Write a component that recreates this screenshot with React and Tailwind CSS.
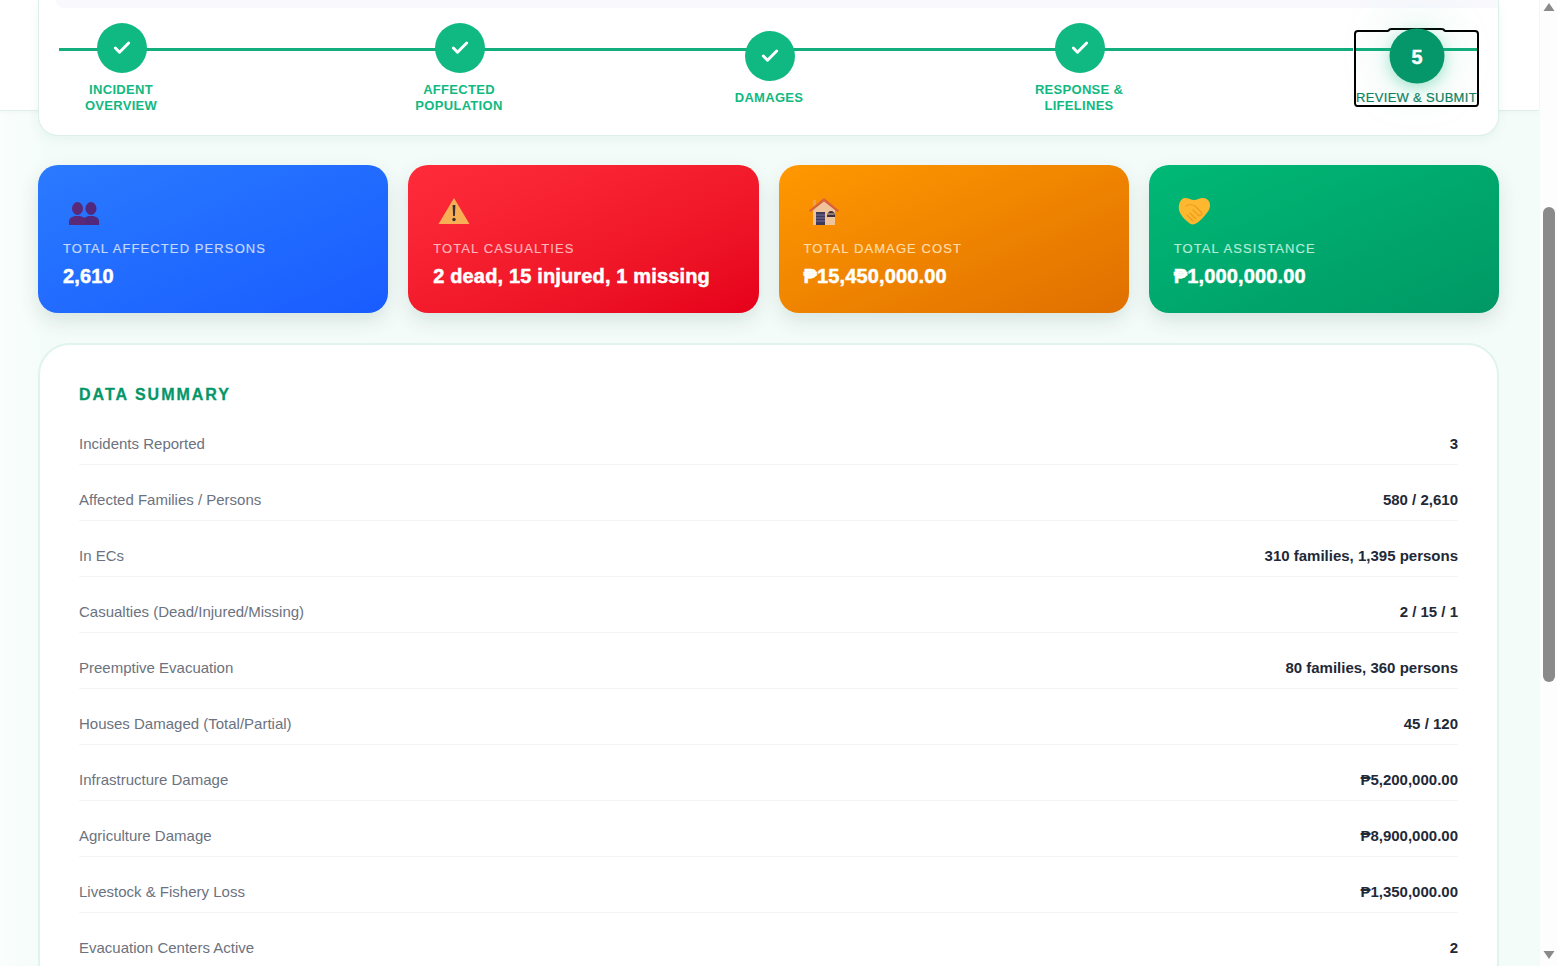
import React from 'react';
import { Check } from 'lucide-react';

const steps = [
    { label: ['INCIDENT', 'OVERVIEW'], width: 'w-[126px]' },
    { label: ['AFFECTED', 'POPULATION'], width: 'w-[126px]' },
    { label: ['DAMAGES'], width: 'w-[70px]' },
    { label: ['RESPONSE &', 'LIFELINES'], width: 'w-[126px]' },
];

const rows = [
    ['Incidents Reported', '3'],
    ['Affected Families / Persons', '580 / 2,610'],
    ['In ECs', '310 families, 1,395 persons'],
    ['Casualties (Dead/Injured/Missing)', '2 / 15 / 1'],
    ['Preemptive Evacuation', '80 families, 360 persons'],
    ['Houses Damaged (Total/Partial)', '45 / 120'],
    ['Infrastructure Damage', '₱5,200,000.00'],
    ['Agriculture Damage', '₱8,900,000.00'],
    ['Livestock & Fishery Loss', '₱1,350,000.00'],
    ['Evacuation Centers Active', '2'],
];

const BustsIcon = () => (
    <svg width="32" height="28" viewBox="0 0 32 28">
        <g fill="#52287c">
            <ellipse cx="23" cy="11.500" rx="5.500" ry="6.500" />
            <path d="M15 28c-.5-5 .5-7 3-8l2.500-1h5l2.500 1c2.500 1 3.500 3 3 8z" />
        </g>
        <g fill="#5a2a78">
            <ellipse cx="9.500" cy="11.500" rx="5.500" ry="6.500" />
            <path d="M1 28c-.5-5 .5-7 3-8l3-1h5l3 1c2.500 1 3.500 3 3 8z" />
        </g>
    </svg>
);

const WarningIcon = () => (
    <svg width="32" height="28" viewBox="0 0 32 28">
        <path d="M16 1 31.500 27H.5z" fill="#f7ae55" />
        <path d="M14.600 8h2.800l-.5 11h-1.800z" fill="#3b3038" />
        <circle cx="16" cy="22.500" r="1.700" fill="#3b3038" />
    </svg>
);

const HouseIcon = () => (
    <svg width="32" height="28" viewBox="0 0 32 28">
        <path d="M5 3h3v6H5z" fill="#e9a24e" />
        <path d="M5 13 16 3l11 10v15H5z" fill="#f0c49a" />
        <path d="M1 13.500 16 1l15 12.500-1.500 1.500L16 4.500 2.500 15z" fill="#d8613e" />
        <path d="M8 15h9v13H8z" fill="#3f3a5c" />
        <path d="M8 18h9M8 21h9M8 24h9" stroke="#7b7494" strokeWidth="1" />
        <path d="M19 19c0-3 2-5 4-5s4 2 4 4v2h-8z" fill="#3a3140" />
        <path d="M19.500 17h7" stroke="#f0c49a" strokeWidth="1" />
    </svg>
);

const HandshakeIcon = () => (
    <svg width="32" height="28" viewBox="0 0 32 28">
        <path d="M7 1c4 0 6 2 9 2s5-2 9-2c4 0 7 3 7 7 0 3-1 6-4 9-3 4-7 8-11 10-3 1-5 0-7-2-4-3-8-8-9-12C0 7 3 1 7 1z" fill="#fdb82f" />
        <path d="M8 9c3-2 6-2 9 0l6 6c2 2 0 4-2 3" stroke="#ee9a1f" strokeWidth="1.200" fill="none" strokeLinecap="round" />
        <path d="M12 16l6 6M9 18l6 6M15 13l6 6" stroke="#ee9a1f" strokeWidth="1.100" fill="none" strokeLinecap="round" />
    </svg>
);

const stats = [
    { label: 'TOTAL AFFECTED PERSONS', value: '2,610', Icon: BustsIcon, tone: 'from-[#2b7aff] to-[#1a5cff]', text: 'text-[#c4d8ff] [-webkit-text-stroke:0.2px_#c4d8ff]' },
    { label: 'TOTAL CASUALTIES', value: '2 dead, 15 injured, 1 missing', Icon: WarningIcon, tone: 'from-[#ff2b3b] to-[#e6001a]', text: 'text-[#ffb4ba] [-webkit-text-stroke:0.2px_#ffb4ba]' },
    { label: 'TOTAL DAMAGE COST', value: '₱15,450,000.00', Icon: HouseIcon, tone: 'from-[#ff9800] to-[#e07000]', text: 'text-[#ffdca8] [-webkit-text-stroke:0.2px_#ffdca8]' },
    { label: 'TOTAL ASSISTANCE', value: '₱1,000,000.00', Icon: HandshakeIcon, tone: 'from-[#00b976] to-[#009865]', text: 'text-[#b4ecd6] [-webkit-text-stroke:0.2px_#b4ecd6]' },
];

const Stepper = () => (
    <div className="relative z-10 h-[136px] bg-white rounded-b-[20px] border border-t-0 border-[#dcefe8] shadow-[0_4px_12px_rgba(16,120,90,0.06)]">
        <div className="ml-[17px] h-2 rounded-bl-xl bg-[#f8f8fd]"></div>
        <div className="relative mt-[15px] mx-5 h-[90px] flex items-center justify-between">
            <div className="absolute left-0 right-0 top-[25px] h-[3px] bg-[#12ae7c]"></div>
            {steps.map((step) => (
                <div key={step.label[0]} className={`relative flex flex-col items-center gap-2 ${step.width}`}>
                    <div className="w-[50px] h-[50px] rounded-full bg-[#10b981] flex items-center justify-center">
                        <Check size={20} strokeWidth={3.5} className="text-white" />
                    </div>
                    <div className="pt-px -mb-px -translate-x-px text-center text-[13px] leading-4 font-semibold tracking-[0.3px] text-[#10b981]">
                        {step.label.map((line) => <div key={line}>{line}</div>)}
                    </div>
                </div>
            ))}
            <div className="relative flex flex-col items-center gap-2 w-[123px] [outline:black_auto_2px]">
                <div className="w-[50px] h-[50px] scale-110 rounded-full bg-[#059669] shadow-[0_4px_14px_rgba(16,185,129,0.35),0_0_50px_rgba(16,185,129,0.18)] flex items-center justify-center text-white text-lg font-bold [-webkit-text-stroke:0.4px_white]">
                    <span className="pt-0.5">5</span>
                </div>
                <div className="pt-px -mb-px whitespace-nowrap text-center text-[13px] leading-4 tracking-[0.3px] text-[#0f7f62] [-webkit-text-stroke:0.2px_#0f7f62]">REVIEW &amp; SUBMIT</div>
            </div>
        </div>
    </div>
);

const StatCard = ({ stat }) => (
    <div className={`h-[148px] p-[25px] rounded-[20px] bg-gradient-to-br ${stat.tone} shadow-[0_8px_20px_rgba(0,60,40,0.12)]`}>
        <div className="w-10 h-[42px] flex items-center justify-center">
            <div className="-mt-px ml-[1px]"><stat.Icon /></div>
        </div>
        <div className={`mt-[9px] text-[13px] leading-4 tracking-[1.1px] whitespace-nowrap ${stat.text}`}>{stat.label}</div>
        <div className="mt-[7px] text-[20px] leading-6 font-extrabold tracking-[0.15px] text-white whitespace-nowrap [-webkit-text-stroke:0.5px_white]">{stat.value}</div>
    </div>
);

export default function App() {
    return (
        <div className="flex h-[966px] overflow-hidden bg-white font-['Liberation_Sans',Arial,sans-serif]">
            <main className="w-[1540px] h-full overflow-hidden bg-gradient-to-r from-[#fafefc] via-[#f4fcf9] via-[3%] to-[#f4fcf9]">
                <div className="w-[1539px] h-[111px] bg-white border-b border-[#e2efe9] shadow-[0_1px_4px_rgba(0,80,60,0.04)]"></div>
                <div className="pl-[38px] pr-[41px] -mt-[111px]">
                    <Stepper />
                    <div className="relative mt-[29px] grid grid-cols-4 gap-5">
                        {stats.map((stat) => <StatCard key={stat.label} stat={stat} />)}
                    </div>
                    <section className="mt-[30px] bg-white rounded-[32px] border-2 border-[#e0f3ec] pt-[41px] px-[39px]">
                        <h3 className="text-base leading-[18px] font-extrabold tracking-[2px] text-[#059669] [-webkit-text-stroke:0.3px_#059669]">DATA SUMMARY</h3>
                        <div className="mt-7">
                            {rows.map(([label, value]) => (
                                <div key={label} className="flex justify-between items-center mb-[23px] pt-[2px] pb-[10px] border-b border-[#f3f4f6] text-[15px] leading-5">
                                    <span className="text-[#6b7280]">{label}</span>
                                    <span className="font-bold text-[#1f2937]">{value}</span>
                                </div>
                            ))}
                        </div>
                    </section>
                </div>
            </main>
            <div className="w-[17px] h-full pl-[3px] pr-[2px] flex flex-col items-center bg-[#fdfdfd]">
                <svg width="12" height="10" viewBox="0 0 12 10" className="mt-[2px]"><path d="M6 1l5.500 8H.5z" fill="#8a8a8a" /></svg>
                <div className="mt-[195px] w-3 h-[475px] rounded-full bg-[#8a8a8a]"></div>
                <svg width="12" height="10" viewBox="0 0 12 10" className="mt-auto mb-[6px]"><path d="M6 9L.5 1h11z" fill="#8a8a8a" /></svg>
            </div>
        </div>
    );
}
